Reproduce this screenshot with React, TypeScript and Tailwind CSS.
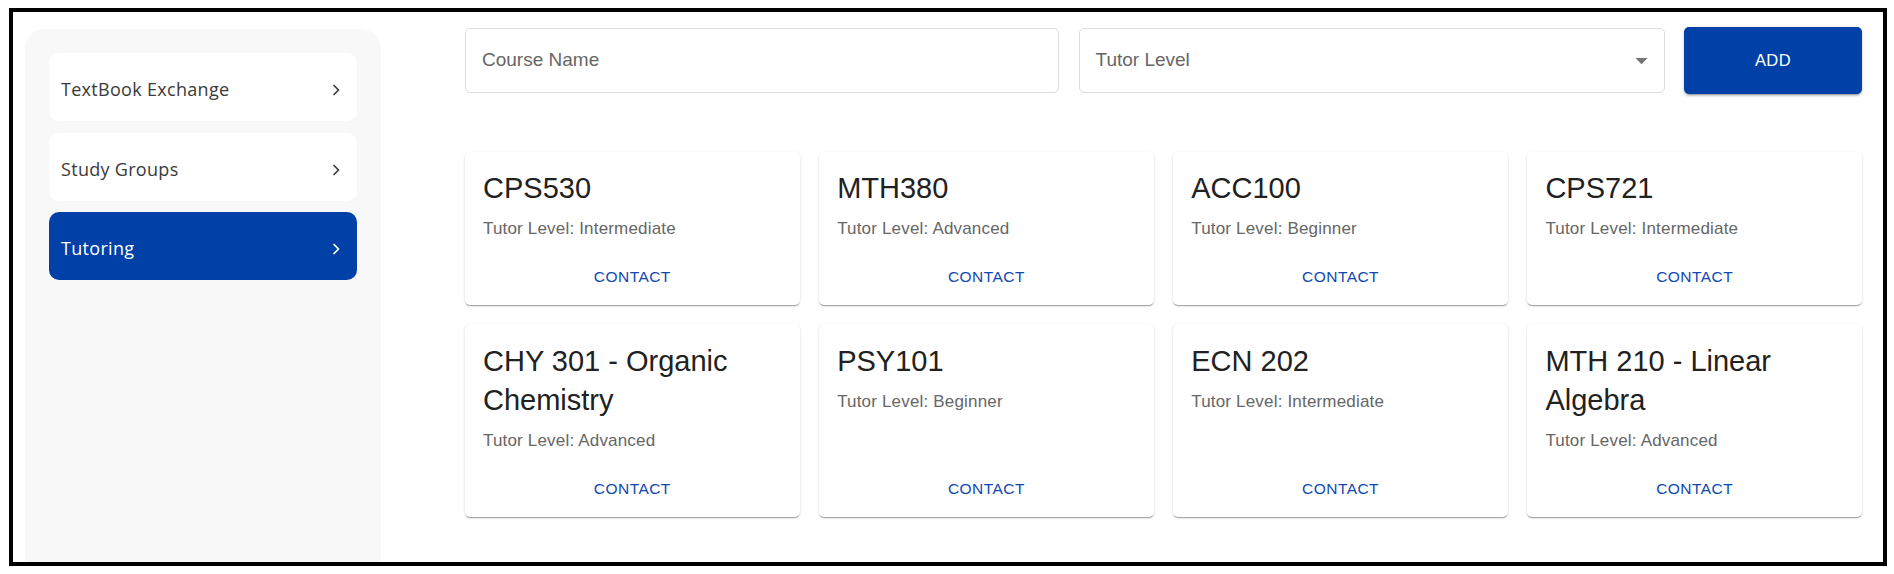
import React from "react";

type Course = {
  name: string;
  level: string;
};

const courses: Course[] = [
  { name: "CPS530", level: "Intermediate" },
  { name: "MTH380", level: "Advanced" },
  { name: "ACC100", level: "Beginner" },
  { name: "CPS721", level: "Intermediate" },
  { name: "CHY 301 - Organic Chemistry", level: "Advanced" },
  { name: "PSY101", level: "Beginner" },
  { name: "ECN 202", level: "Intermediate" },
  { name: "MTH 210 - Linear Algebra", level: "Advanced" },
];

const menu = [
  { label: "TextBook Exchange", active: false },
  { label: "Study Groups", active: false },
  { label: "Tutoring", active: true },
];

const Chevron = ({ className }: { className?: string }) => (
  <svg width="9" height="12" viewBox="0 0 9 12" fill="none" className={className}>
    <polyline
      points="2,1.5 6.5,6 2,10.5"
      stroke="currentColor"
      strokeWidth="1.7"
      strokeLinecap="round"
      strokeLinejoin="round"
    />
  </svg>
);

const CourseCard = ({ course }: { course: Course }) => (
  <div className="flex flex-col bg-white rounded-[5px] shadow-[0_2px_1px_-1px_rgba(0,0,0,0.2),0_1px_1px_0_rgba(0,0,0,0.14),0_1px_3px_0_rgba(0,0,0,0.12)]">
    <div className="px-[18px] pt-[17.5px]">
      <h2 className="text-[29px] leading-[39px] text-[#212121] mb-[9px]">{course.name}</h2>
      <p className="text-[17px] leading-[24px] tracking-[0.18px] text-[#666666]">
        Tutor Level: {course.level}
      </p>
    </div>
    <div className="mt-auto pt-[18px] pb-[10px] flex justify-center">
      <button className="h-[36px] px-[6px] text-[15.5px] tracking-[0.45px] uppercase text-[#1048b0]">
        Contact
      </button>
    </div>
  </div>
);

export default function App() {
  return (
    <div
      className="w-[1894px] h-[574px] bg-white pl-[9px] pt-[8px]"
      style={{ fontFamily: '"Liberation Sans", Arial, sans-serif' }}
    >
      <div className="w-[1878px] h-[558px] border-4 border-black flex overflow-hidden">
        {/* Sidebar */}
        <aside className="ml-[12px] mt-[17px] w-[356px] shrink-0 bg-[#f8f8f8] rounded-t-[20px] px-[24px] pt-[24px] flex flex-col gap-[11.5px]">
          {menu.map((item) => (
            <div
              key={item.label}
              className={
                item.active
                  ? "h-[68px] rounded-[10px] bg-[#0040a7] text-white flex items-center justify-between pl-[12px] pr-[16px]"
                  : "h-[68px] rounded-[10px] bg-white text-[#3a3a3a] flex items-center justify-between pl-[12px] pr-[16px]"
              }
            >
              <span
                className="text-[18px] tracking-[0.3px] leading-none mt-[4px]"
                style={{ fontFamily: '"Open Sans", sans-serif' }}
              >
                {item.label}
              </span>
              <Chevron className="mt-[6px]" />
            </div>
          ))}
        </aside>

        {/* Main */}
        <main className="ml-[84px] mr-[21px] mt-[14.5px] flex-1 flex flex-col">
          <div className="flex items-center gap-[19.5px]">
            <div className="flex-1 h-[65px] rounded-[5px] border border-[#dcdcdc] bg-white flex items-center px-[16px]">
              <span className="text-[19px] text-[#666666]">Course Name</span>
            </div>
            <div className="flex-1 h-[65px] rounded-[5px] border border-[#dcdcdc] bg-white flex items-center justify-between pl-[16px] pr-[8px]">
              <span className="text-[19px] text-[#666666]">Tutor Level</span>
              <svg width="29" height="29" viewBox="0 0 24 24" className="text-[#757575]">
                <path d="M7 10l5 5 5-5z" fill="currentColor" />
              </svg>
            </div>
            <button className="w-[178px] h-[67px] rounded-[5px] bg-[#0040a7] text-white text-[16.5px] tracking-[0.47px] shadow-[0_3px_1px_-2px_rgba(0,0,0,0.2),0_2px_2px_0_rgba(0,0,0,0.14),0_1px_5px_0_rgba(0,0,0,0.12)]">
              ADD
            </button>
          </div>

          <div className="grid grid-cols-4 gap-x-[19.5px] gap-y-[19px] mt-[58px]">
            {courses.map((c) => (
              <CourseCard key={c.name} course={c} />
            ))}
          </div>
        </main>
      </div>
    </div>
  );
}
